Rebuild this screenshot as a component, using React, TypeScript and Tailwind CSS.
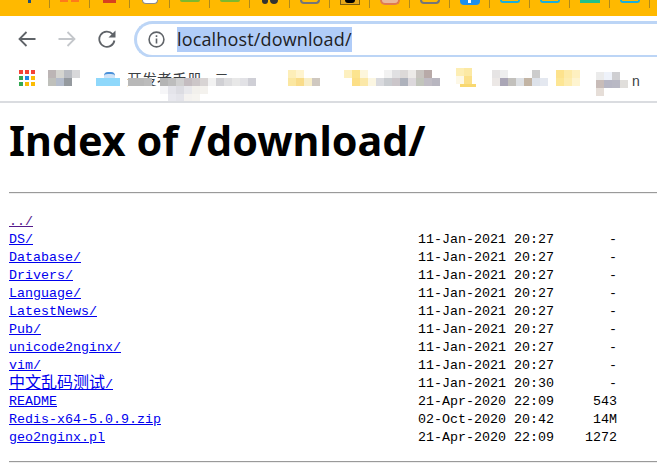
import React from "react";

const Mosaic = ({ rows, size = 8 }: { rows: string[][]; size?: number }) => (
  <div className="flex flex-col">
    {rows.map((r, i) => (
      <div key={i} className="flex">
        {r.map((c, j) => (
          <div key={j} style={{ width: size, height: size, background: c }} />
        ))}
      </div>
    ))}
  </div>
);

const W = "transparent";

const Fav = ({ children, w = 40 }: { children?: React.ReactNode; w?: number }) => (
  <div style={{ width: w }} className="h-2 shrink-0 border-r border-[#b0891c] flex justify-end overflow-hidden">
    <div className="w-[39px] flex justify-center">{children}</div>
  </div>
);

const Shape = ({ c }: { c: string }) => <div className={c} />;

type Row = { name: string; cjk?: string; date: string; size: string; visited?: boolean };

const d1 = "11-Jan-2021 20:27";
const rows: Row[] = [
  { name: "../", date: "", size: "", visited: true },
  { name: "DS/", date: d1, size: "-" },
  { name: "Database/", date: d1, size: "-" },
  { name: "Drivers/", date: d1, size: "-" },
  { name: "Language/", date: d1, size: "-" },
  { name: "LatestNews/", date: d1, size: "-" },
  { name: "Pub/", date: d1, size: "-" },
  { name: "unicode2nginx/", date: d1, size: "-" },
  { name: "vim/", date: d1, size: "-" },
  { name: "/", cjk: "中文乱码测试", date: "11-Jan-2021 20:30", size: "-" },
  { name: "README", date: "21-Apr-2020 22:09", size: "543" },
  { name: "Redis-x64-5.0.9.zip", date: "02-Oct-2020 20:42", size: "14M" },
  { name: "geo2nginx.pl", date: "21-Apr-2020 22:09", size: "1272" },
];

export default function App() {
  return (
    <div className="w-[657px] h-[473px] overflow-hidden bg-white font-['Liberation_Sans',sans-serif]">
      {/* tab strip */}
      <div className="h-4 bg-[#ffb900] flex items-start overflow-hidden">
        <Fav w={50}>
          <Shape c="w-[3px] h-[3px] bg-[#1f4e79]" />
        </Fav>
        <Fav>
          <div className="flex gap-[3px]">
            <Shape c="w-[8px] h-[2px] bg-[#ff7a1a]" />
            <Shape c="w-[8px] h-[2px] bg-[#ff7a1a]" />
          </div>
        </Fav>
        <Fav>
          <Shape c="w-[13px] h-[3px] bg-[#d8401f]" />
        </Fav>
        <Fav>
          <div className="w-[16px] h-1 bg-white rounded-b-full border-b border-x border-[#8a8a8a]" />
        </Fav>
        <Fav>
          <div className="w-[20px] h-[2px] bg-[#7cb82f] rounded-b-full" />
        </Fav>
        <Fav>
          <div className="w-[20px] h-[2px] bg-[#7cb82f] rounded-b-full" />
        </Fav>
        <Fav>
          <div className="flex gap-[2px]">
            <Shape c="w-[6px] h-[4px] bg-[#333] rounded-b" />
            <Shape c="w-[8px] h-[4px] bg-[#333] rounded-b" />
          </div>
        </Fav>
        <Fav>
          <div className="w-[16px] h-[2px] border-b-[2px] border-x-[2px] border-[#74757a] rounded-b-full box-content" />
        </Fav>
        <Fav>
          <div className="w-5 h-[5px] bg-[#e8a818] border-b border-x border-[#7a5c10] flex justify-center">
            <div className="w-[10px] h-[3px] bg-black rounded-b-full" />
          </div>
        </Fav>
        <Fav>
          <div className="w-[20px] h-[5px] bg-[#e9b89a] rounded-b-full border-b-2 border-x-2 border-[#e07a50]" />
        </Fav>
        <Fav>
          <div className="w-[16px] h-[2px] border-b-[2px] border-x-[2px] border-[#74757a] rounded-b-full box-content" />
        </Fav>
        <Fav>
          <div className="w-5 h-[5px] bg-[#1e8ff0] rounded-b flex justify-center">
            <div className="w-[3px] h-[3px] bg-white" />
          </div>
        </Fav>
        <Fav>
          <div className="w-5 h-[3px] border-b-2 border-x-2 border-[#18aee0] rounded-b" />
        </Fav>
        <Fav>
          <div className="w-5 h-[3px] border-b-2 border-x-2 border-[#18aee0] rounded-b" />
        </Fav>
        <Fav>
          <div className="w-5 h-[3px] bg-[#1fc08a]" />
        </Fav>
        <Fav>
          <div className="w-5 h-[3px] border-b-2 border-x-2 border-[#18aee0] rounded-b" />
        </Fav>
      </div>

      {/* toolbar */}
      <div className="h-[41px] bg-white flex items-center">
        <svg width="18" height="16" viewBox="0 0 18 16" className="ml-[18px] mt-[5px]" fill="none" stroke="#5f6368" strokeWidth="1.8">
          <path d="M17.5 8H1.5M8.5 1L1.5 8l7 7" />
        </svg>
        <svg width="18" height="16" viewBox="0 0 18 16" className="ml-[22px] mt-[5px]" fill="none" stroke="#c4c7cb" strokeWidth="1.8">
          <path d="M0.5 8h16M9.5 1l7 7-7 7" />
        </svg>
        <svg width="18" height="18" viewBox="0 0 18 18" className="ml-[22px] mt-[5px]">
          <path d="M14.6 4.2A7.6 7.6 0 1 0 16.4 10.5" fill="none" stroke="#5f6368" strokeWidth="1.8" />
          <path d="M17.5 0.6V7.6H10.5Z" fill="#5f6368" />
        </svg>
        <div className="ml-[18px] flex-1 h-[37px] mt-[5px] -mr-8 rounded-l-[19px] border-y-[3px] border-l-[3px] border-[#bcd5f6] flex items-center bg-white">
          <svg width="17" height="17" viewBox="0 0 17 17" className="ml-[11px]" fill="none" stroke="#5f6368" strokeWidth="1.6">
            <circle cx="8.5" cy="8.5" r="7.4" />
            <path d="M8.5 7.5v5M8.5 4.2v1.8" />
          </svg>
          <span className="ml-[12px] h-[25px] w-[175px] bg-[#b0ccf8] text-[#202124] text-[18px] leading-[25px] font-['Open_Sans',sans-serif] whitespace-nowrap tracking-[0.15px]">
            localhost/download/
          </span>
        </div>
      </div>

      {/* bookmarks */}
      <div className="relative h-[46px] bg-white border-b-2 border-[#dadce0] flex items-start pt-[13px] overflow-hidden">
        <div className="ml-[19px] grid grid-cols-3 gap-[2px] w-4 h-4">
          {["#f44336", "#f44336", "#f44336", "#34a853", "#1e88e5", "#fbbc04", "#34a853", "#fbbc04", "#fbbc04"].map((c, i) => (
            <div key={i} style={{ background: c }} className="w-1 h-1" />
          ))}
        </div>
        <div className="ml-[13px]">
          <Mosaic
            rows={[
              ["#bcb5b5", "#d5d5d0", "#b9bcc2", "#d8d8da"],
              ["#bfc0bb", "#b4bccb", "#959a9f", W],
            ]}
          />
        </div>
        <div className="ml-4 w-6 h-4 flex flex-col items-start">
          <div className="ml-2 mt-[2px] w-[11px] h-[6px] bg-[#cfe3f7] border-t-2 border-[#4a90d9] rounded-t-sm" />
          <div className="w-6 h-2 bg-[#8fd8fb]" />
        </div>
        <span className="ml-[7px] w-[110px] text-[15px] leading-[20px] text-[#3c4043] whitespace-nowrap overflow-hidden font-['Noto_Sans_CJK_SC',sans-serif] -mt-[1px]">
          开发者手册 - 云
        </span>
        <div className="absolute left-[128px] top-[21px]">
          <Mosaic
            rows={[
              ["#b8b8b8", "#b8b8b8", "#bcbcbc", W, "#b4b4b4", "#bdbdbd", "#d0d0d0", "#c4bcc0", "#ccc6c8", "#d8d4d4", "#f2f2f2", "#d0d0d4", "#dedee0", "#e8e8e8", "#e2e2e6", "#cfcfd6"],
              ["#ffffff", "#ffffff", "#ffffff", "#ffffff", "#f6f6f8", "#e4e4ea", "#dcdce2", "#e8e8ec", "#f2f0ec", "#f4f2ee", "#ffffff", "#ffffff", "#ffffff", "#ffffff", "#ffffff", "#ffffff"],
              [W, W, W, W, W, "#e8e8ee", "#e4e4ea", "#f4f2f0", "#f6f4f0", W, W, W, W, W, W, W],
            ]}
          />
        </div>
        <div className="ml-[51px]">
          <Mosaic
            rows={[
              ["#fdeeb8", "#fff4cf", W, W, W],
              ["#fbe7a1", "#f9dc8a", "#f8eec8", "#cfc8c0", W],
            ]}
          />
        </div>
        <div className="ml-4">
          <Mosaic
            rows={[
              ["#fdf0c0", "#fce48f", "#fdf6dc", W, W, "#f2f2f2", "#e0e0e2", "#dcd9d8", "#eceae8", "#c8c4c0", "#b8aaa8", W],
              [W, "#fcdf87", "#fbe8a8", "#fbf6e2", "#d9dade", "#c9ccd0", "#cbc6ca", "#aeb2bc", "#dcd8dc", "#c2c5bc", "#c0bcc4", "#b8b6c0"],
            ]}
          />
        </div>
        <div className="ml-4 -mt-[2px]">
          <Mosaic
            rows={[
              ["#fdeeb4", "#fce9a4"],
              ["#fdf8e6", "#fbe08a"],
            ]}
            size={8}
          />
          <div className="ml-1 w-4 h-[3px] bg-[#f8d870]" />
        </div>
        <div className="ml-4">
          <Mosaic
            rows={[
              ["#e6e4e4", "#eeeeee", W, W, "#fdfdfd", "#cccccc", W],
              ["#ece8e6", "#aaa6b6", "#c2c0bc", "#dde0e4", "#c2b4a4", "#dde2ea", "#e4e8f0"],
            ]}
          />
        </div>
        <div className="ml-2">
          <Mosaic
            rows={[
              ["#fde28c", "#fdeaa8", "#fef0c0"],
              ["#fde694", "#fdecb0", "#fef4d0"],
            ]}
          />
        </div>
        <div className="ml-4 mt-[2px]">
          <Mosaic
            rows={[
              ["#ebebeb", "#eef2fa", "#cfcfd2", W],
              ["#c8bcb8", "#b6b6c4", "#b8b8c4", "#e0dedb"],
              ["#e6ded8", W, W, W],
            ]}
          />
        </div>
        <span className="text-[14px] leading-[18px] text-[#3c4043] mt-[2px] ml-1">n</span>
      </div>

      {/* page */}
      <div className="pl-[9px]">
        <h1 className="mt-[12px] text-[41.3px] leading-[50px] font-bold text-black font-['Noto_Sans',sans-serif] whitespace-nowrap">
          Index of /download/
        </h1>
        <div className="mt-[27px] border-t border-b border-t-[#9a9a9a] border-b-[#eeeeee] h-[2px]" />
        <div className="mt-[19px] text-[13.33px] leading-[18px] font-['Liberation_Mono',monospace] text-black">
          {rows.map((r) => (
            <div key={r.name + r.cjk} className="h-[18px] flex whitespace-pre">
              <div className="w-[409px]">
                <a href="#" className={r.visited ? "underline text-[#551a8b]" : "underline text-[#0000ee]"}>
                  {r.cjk ? (
                    <span className="text-[16px] leading-[18px] font-['Liberation_Mono','Noto_Sans_CJK_SC',monospace]">{r.cjk}</span>
                  ) : null}
                  {r.name}
                </a>
              </div>
              <div className="w-[136px]">{r.date}</div>
              <div className="w-[63px] text-right">{r.size}</div>
            </div>
          ))}
        </div>
        <div className="mt-[14px] border-t border-b border-t-[#9a9a9a] border-b-[#eeeeee] h-[2px]" />
      </div>
    </div>
  );
}
